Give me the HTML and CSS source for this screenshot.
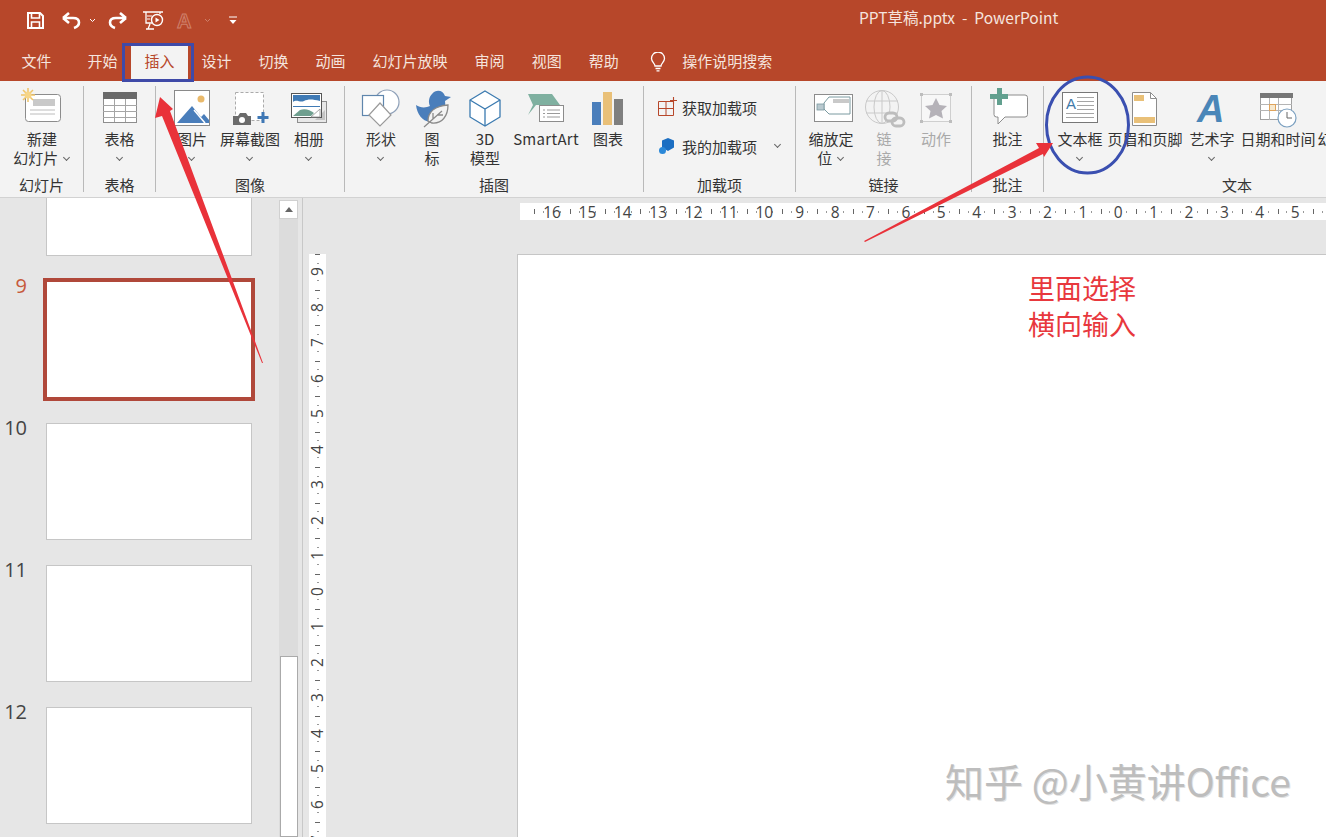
FILE: index.html
```html
<!DOCTYPE html>
<html lang="zh-CN">
<head>
<meta charset="utf-8">
<title>PPT草稿.pptx - PowerPoint</title>
<link rel="stylesheet" href="styles.css">
</head>
<body>
<div class="titlebar">
  <svg class="qat" width="260" height="40" viewBox="0 0 260 40" fill="none" stroke="#fff" stroke-width="2">
    <path d="M28 13h12l3 3v12H28z"/><path d="M31.500 13v5h8v-5M31.500 28v-6h8v6" stroke-width="1.600"/>
    <path d="M63 18l6-5M63 18l6 5M63 18h10c4 0 6 2 6 4.500 0 2.500-2 4.500-5 5.500" stroke-width="2.600"/>
    <path d="M90 19l2.500 2.500L95 19" stroke-width="1"/>
    <path d="M126 18l-6-5M126 18l-6 5M126 18h-10c-4 0-6 2-6 4.500 0 2.500 2 4.500 5 5.500" stroke-width="2.600"/>
    <path d="M143 12h20M146 12v11h6M160 12v2M150 24l-2 5M146 29h8" stroke-width="1.300"/>
    <path d="M147 16h5M147 19h3" stroke-width="1"/>
    <circle cx="157" cy="20" r="5.500" stroke-width="1.400"/><path d="M155.500 17.500l4 2.500-4 2.500z" fill="#fff" stroke="none"/>
    <text x="177" y="28" class="qat-a">A</text>
    <path d="M205 19l2.500 2.500 2.500-2.500" stroke="#cf806a" stroke-width="1"/>
    <path d="M229 17h8" stroke-width="1"/><path d="M229.500 20h7l-3.500 4z" fill="#fff" stroke="none"/>
  </svg>
  <div class="doc-title">PPT草稿.pptx&nbsp; - &nbsp;PowerPoint</div>
</div>

<nav class="tabs">
  <span class="tab tab-file">文件</span>
  <span class="tab">开始</span>
  <span class="tab tab-active">插入</span>
  <span class="tab">设计</span>
  <span class="tab">切换</span>
  <span class="tab">动画</span>
  <span class="tab">幻灯片放映</span>
  <span class="tab">审阅</span>
  <span class="tab">视图</span>
  <span class="tab">帮助</span>
  <svg class="bulb" width="16" height="20" viewBox="0 0 16 20" fill="none" stroke="#fff" stroke-width="1.300">
    <path d="M5 14c0-2.500-3.500-4-3.500-7.500a6.500 6.500 0 0 1 13 0C14.500 10 11 11.500 11 14z"/><path d="M5.500 16.500h5M6.500 18.800h3"/>
  </svg>
  <span class="tell">操作说明搜索</span>
</nav>

<section class="ribbon">
  <div class="group g-slides">
    <div class="buttons">
      <div class="btn b-new">
        <svg class="ico" width="48" height="40" viewBox="0 0 48 40">
          <rect x="7.500" y="6.500" width="35" height="27" rx="3" fill="#fff" stroke="#8c8c8c"/>
          <rect x="15" y="11" width="22" height="7" fill="#c9c9c9"/>
          <path d="M12 22h25M12 26h25" stroke="#bcbcbc"/>
          <path d="M10 0v14M3 7h14M5 2l10 10M15 2L5 12" stroke="#efc468" stroke-width="1.500"/>
          <circle cx="10" cy="7" r="3.500" fill="#f6d588"/>
        </svg>
        <div class="label">新建<br>幻灯片 <i class="chev"></i></div>
      </div>
    </div>
    <div class="group-name">幻灯片</div>
  </div>

  <div class="group g-tables">
    <div class="buttons">
      <div class="btn b-table">
        <svg class="ico" width="48" height="40" viewBox="0 0 48 40">
          <rect x="7.500" y="4.500" width="33" height="30" fill="#fff" stroke="#8e8e8e"/>
          <rect x="7" y="4" width="34" height="7" fill="#6a6a6a"/>
          <path d="M7 17.500h34M7 23.500h34M7 29.500h34M18.500 11v23M29.500 11v23" stroke="#a5a5a5"/>
        </svg>
        <div class="label">表格<br><i class="chev"></i></div>
      </div>
    </div>
    <div class="group-name">表格</div>
  </div>

  <div class="group g-images">
    <div class="buttons">
      <div class="btn b-pic">
        <svg class="ico" width="48" height="40" viewBox="0 0 48 40">
          <rect x="6.500" y="2.500" width="35" height="35" fill="#fff" stroke="#8a8a8a"/>
          <circle cx="33" cy="11" r="3.500" fill="#e9b96b"/>
          <path d="M9 35l15-17 9 11 3-3 5 6v3z" fill="#4a7ebb"/>
          <path d="M26 22l11 13" stroke="#fff" stroke-width="1.500"/>
        </svg>
        <div class="label">图片<br><i class="chev"></i></div>
      </div>
      <div class="btn b-shot">
        <svg class="ico" width="48" height="40" viewBox="0 0 48 40">
          <rect x="9.500" y="4.500" width="28" height="28" fill="#fff" stroke="#aaa" stroke-dasharray="3 2"/>
          <path d="M7 28h5l2-3h6l2 3h3v9H7z" fill="#6b6b6b"/>
          <circle cx="16" cy="32" r="3" fill="#fff"/>
          <path d="M37 24v11M31.500 29.500h11" stroke="#3f78b5" stroke-width="3"/>
        </svg>
        <div class="label">屏幕截图<br><i class="chev"></i></div>
      </div>
      <div class="btn b-album">
        <svg class="ico" width="48" height="40" viewBox="0 0 48 40">
          <rect x="12.500" y="13.500" width="29" height="21" fill="#e8e8e8" stroke="#8e8e8e"/>
          <path d="M30 32l10-10v10z" fill="#c4c4c4"/>
          <rect x="6.500" y="5.500" width="30" height="24" fill="#fff" stroke="#555"/>
          <rect x="8" y="7" width="27" height="12" fill="#3f7ab5"/>
          <path d="M8 14c4-3 7 1 11-1s8-2 16 0v5H8z" fill="#fff"/>
          <path d="M8 28l7-6c5-2 10 0 14 3l-3 3z" fill="#6f9f8f"/>
          <path d="M26 29l9-8v8z" fill="#fff" stroke="#8e8e8e" stroke-width=".8"/>
        </svg>
        <div class="label">相册<br><i class="chev"></i></div>
      </div>
    </div>
    <div class="group-name">图像</div>
  </div>

  <div class="group g-illus">
    <div class="buttons">
      <div class="btn b-shape">
        <svg class="ico" width="48" height="40" viewBox="0 0 48 40" fill="none">
          <circle cx="30" cy="14" r="12" fill="#fff" stroke="#8ea0b8" stroke-width="1.200"/>
          <rect x="5.500" y="7.500" width="21" height="20" fill="#fff" stroke="#5f86ad" stroke-width="1.200"/>
          <path d="M23 15l11 12-11 11-11-11z" fill="#fff" stroke="#9a9a9a" stroke-width="1.200"/>
        </svg>
        <div class="label">形状<br><i class="chev"></i></div>
      </div>
      <div class="btn b-icon">
        <svg class="ico" width="48" height="40" viewBox="0 0 48 40">
          <path d="M8 17C12 20 18 20 22 18 20 14 21 9 24 6 28 1 35 2 37 8L43 9 37 13C38 20 36 26 30 30L22 34C14 33 9 26 8 17z" fill="#4a7ebb"/>
          <path d="M20 33c0-9 7-15 20-16 0 11-6 19-16 18z" fill="#f3f3f3" stroke="#8a8a8a" stroke-width="1.300"/>
          <path d="M16 39l18-16M25 31v-6M29 27h6" fill="none" stroke="#8a8a8a" stroke-width="1.300"/>
        </svg>
        <div class="label">图<br>标</div>
      </div>
      <div class="btn b-3d">
        <svg class="ico" width="48" height="40" viewBox="0 0 48 40" fill="none" stroke="#3b7ab0" stroke-width="1.300">
          <path d="M24 3l15 9v17l-15 9-15-9V12z" fill="#fff"/><path d="M9 12l15 9 15-9M24 21v17"/>
        </svg>
        <div class="label">3D<br>模型</div>
      </div>
      <div class="btn b-smart">
        <svg class="ico" width="48" height="40" viewBox="0 0 48 40">
          <path d="M6 6h24l8 11H14l-8 10 5-10z" fill="#7fb0a0"/>
          <rect x="17.500" y="17.500" width="24" height="16" fill="#fff" stroke="#8c8c8c"/>
          <path d="M21 22h2M25 22h13M21 25.500h2M25 25.500h13M21 29h2M25 29h13" stroke="#9a9a9a"/>
        </svg>
        <div class="label">SmartArt</div>
      </div>
      <div class="btn b-chart">
        <svg class="ico" width="48" height="40" viewBox="0 0 48 40">
          <rect x="8" y="14" width="9" height="23" fill="#4a7ebb"/>
          <rect x="19" y="4" width="9" height="33" fill="#e9c078"/>
          <rect x="30" y="11" width="9" height="26" fill="#7f7f7f"/>
        </svg>
        <div class="label">图表</div>
      </div>
    </div>
    <div class="group-name">插图</div>
  </div>

  <div class="group g-addins">
    <div class="addin-list">
      <div class="addin">
        <svg width="20" height="20" viewBox="0 0 20 20" fill="none" stroke="#b7472a">
          <path d="M.5 4.500h15v14H.500zM8 4.500v14M.5 11.500h15"/><path d="M15.500 0v7M12 3.500h7" stroke-width="1.100"/>
        </svg>
        <span>获取加载项</span>
      </div>
      <div class="addin">
        <svg width="20" height="20" viewBox="0 0 20 20">
          <path d="M10 2l6 2.500v7L10 15l-6-3.500v-7z" fill="#1b6ec2"/><circle cx="4.500" cy="14.500" r="3.500" fill="#2b88d8"/>
        </svg>
        <span>我的加载项</span><i class="chev chev-addin"></i>
      </div>
    </div>
    <div class="group-name">加载项</div>
  </div>

  <div class="group g-links">
    <div class="buttons">
      <div class="btn b-zoom">
        <svg class="ico" width="48" height="40" viewBox="0 0 48 40">
          <rect x="7.500" y="6.500" width="38" height="27" fill="#fff" stroke="#8c8c8c"/>
          <path d="M17 15l5-6h21v17H22l-5-5z" fill="#fff" stroke="#7a9aa0"/>
          <rect x="10" y="16" width="7" height="6" fill="#b9c9cf" stroke="#7a9aa0" stroke-width=".8"/>
          <rect x="26" y="11" width="16" height="4" fill="#c9c9c9"/>
        </svg>
        <div class="label">缩放定<br>位 <i class="chev"></i></div>
      </div>
      <div class="btn b-link disabled">
        <svg class="ico" width="48" height="40" viewBox="0 0 48 40" fill="none" stroke="#c9c9c9">
          <circle cx="22" cy="19" r="16.500"/><ellipse cx="22" cy="19" rx="8" ry="16.500"/>
          <path d="M6 13h32M6 25h32M22 2v34"/>
          <rect x="25" y="25" width="12" height="8" rx="4" stroke="#bdbdbd" stroke-width="2.800" fill="#f3f3f3"/>
          <rect x="32" y="30" width="12" height="8" rx="4" stroke="#bdbdbd" stroke-width="2.800"/>
        </svg>
        <div class="label">链<br>接</div>
      </div>
      <div class="btn b-action disabled">
        <svg class="ico" width="48" height="40" viewBox="0 0 48 40">
          <rect x="9.500" y="6.500" width="29" height="27" fill="#f7f7f7" stroke="#cfcfcf"/>
          <path d="M24 10l3.500 7 7.500 1-5.500 5 1.500 7.500-7-3.500-7 3.500 1.500-7.500-5.500-5 7.500-1z" fill="#b5b2b8"/>
          <path d="M8 5h3v3H8zM37 5h3v3h-3zM8 32h3v3H8zM37 32h3v3h-3z" fill="#bdbdbd"/>
        </svg>
        <div class="label">动作</div>
      </div>
    </div>
    <div class="group-name">链接</div>
  </div>

  <div class="group g-comment">
    <div class="buttons">
      <div class="btn b-comment">
        <svg class="ico" width="48" height="40" viewBox="0 0 48 40">
          <path d="M10 7h31a2.500 2.500 0 0 1 2.500 2.500v17a2.500 2.500 0 0 1-2.500 2.500H21l-7 7v-7h-1.500A2.500 2.500 0 0 1 10 26.500z" fill="#fff" stroke="#8c8c8c"/>
          <path d="M13 0h5v6h6v5h-6v6h-5v-6H6V6h7z" fill="#62a08f"/>
        </svg>
        <div class="label">批注</div>
      </div>
    </div>
    <div class="group-name">批注</div>
  </div>

  <div class="group g-text">
    <div class="buttons">
      <div class="btn b-textbox">
        <svg class="ico" width="48" height="40" viewBox="0 0 48 40">
          <rect x="6.500" y="4.500" width="35" height="30" fill="#fff" stroke="#777"/>
          <text x="10" y="21" class="ico-a">A</text>
          <path d="M21 9.500h17M21 13.500h17M21 17.500h17M21 21.500h17M10 25.500h28M10 29.500h28" stroke="#a5a5a5"/>
        </svg>
        <div class="label">文本框<br><i class="chev"></i></div>
      </div>
      <div class="btn b-header">
        <svg class="ico" width="48" height="40" viewBox="0 0 48 40">
          <path d="M11.500 4.500h18l6 6v27h-24z" fill="#fff" stroke="#8c8c8c"/>
          <path d="M29.500 4.500v6h6" fill="none" stroke="#8c8c8c"/>
          <rect x="13" y="7" width="10" height="6" fill="#e9c078"/>
          <rect x="13" y="29" width="21" height="6" fill="#e9c078"/>
        </svg>
        <div class="label">页眉和页脚</div>
      </div>
      <div class="btn b-wordart">
        <svg class="ico" width="48" height="40" viewBox="0 0 48 40">
          <text x="9" y="34" class="ico-wa">A</text>
        </svg>
        <div class="label">艺术字<br><i class="chev"></i></div>
      </div>
      <div class="btn b-date">
        <svg class="ico" width="48" height="40" viewBox="0 0 48 40">
          <rect x="6.500" y="5.500" width="31" height="26" fill="#fff" stroke="#a0a0a0"/>
          <rect x="6" y="5" width="33" height="5" fill="#777"/>
          <path d="M6 16.500h32M6 22.500h32M15.500 10v22M24.500 10v22" stroke="#b5b5b5"/>
          <rect x="15.500" y="16.500" width="6" height="6" fill="#f7e9cf" stroke="#e0a45c"/>
          <circle cx="33" cy="30" r="9" fill="#fff" stroke="#7ba0c0" stroke-width="1.200"/>
          <path d="M33 24v6h5" fill="none" stroke="#666"/>
        </svg>
        <div class="label">日期和时间</div>
      </div>
      <div class="btn b-number">
        <div class="ico-gap"></div>
        <div class="label">幻灯片编号</div>
      </div>
    </div>
    <div class="group-name">文本</div>
  </div>
</section>

<main class="main">
  <aside class="thumbs">
    <div class="row row-first"><span class="num"></span><div class="thumb thumb-first"></div></div>
    <div class="row"><span class="num num-active">9</span><div class="thumb thumb-active"></div></div>
    <div class="row"><span class="num">10</span><div class="thumb"></div></div>
    <div class="row"><span class="num">11</span><div class="thumb"></div></div>
    <div class="row"><span class="num">12</span><div class="thumb"></div></div>
  </aside>
  <div class="scrollbar">
    <div class="sb-up"><i class="sb-tri"></i></div>
    <div class="sb-thumb"></div>
  </div>
  <div class="editor">
    <div class="hruler">
      <span>16</span><span>15</span><span>14</span><span>13</span><span>12</span><span>11</span><span>10</span><span>9</span><span>8</span><span>7</span><span>6</span><span>5</span><span>4</span><span>3</span><span>2</span><span>1</span><span>0</span><span>1</span><span>2</span><span>3</span><span>4</span><span>5</span><span>6</span>
    </div>
    <div class="stage">
      <div class="vruler">
        <span><b>9</b></span><span><b>8</b></span><span><b>7</b></span><span><b>6</b></span><span><b>5</b></span><span><b>4</b></span><span><b>3</b></span><span><b>2</b></span><span><b>1</b></span><span><b>0</b></span><span><b>1</b></span><span><b>2</b></span><span><b>3</b></span><span><b>4</b></span><span><b>5</b></span><span><b>6</b></span><span><b>7</b></span>
      </div>
      <div class="slide"></div>
    </div>
  </div>
</main>

<svg class="annot" width="1326" height="837" viewBox="0 0 1326 837">
  <rect x="123.500" y="44.500" width="69" height="36" fill="none" stroke="#3f4aa8" stroke-width="3"/>
  <ellipse cx="1087.500" cy="125" rx="41" ry="48" fill="none" stroke="#3a4fb0" stroke-width="3"/>
  <path d="M160 97l13 12-3 2 93 252-1 0-100-247-7 2z" fill="#e9323a"/>
  <path d="M1053 143l-17 0 3 5-175 93 1 1 178-88 1 3z" fill="#e9323a"/>
</svg>
<div class="note">里面选择<br>横向输入</div>
<div class="watermark">知乎 @小黄讲Office</div>
</body>
</html>
```
FILE: styles.css
```css
* { box-sizing: border-box; }
html, body { margin: 0; height: 837px; overflow: hidden; }
body {
  position: relative;
  width: 1326px;
  font-family: "Noto Sans CJK SC", "Noto Sans", sans-serif;
  font-size: 15px;
  color: #333;
  background: #e6e6e6;
}

.titlebar { height: 40px; background: #b7472a; display: flex; align-items: center; color: #f5e4de; }
.qat { flex: none; }
.qat-a { font: bold 20px "Liberation Sans", sans-serif; fill: none; stroke: #cf806a; stroke-width: 1; }
.doc-title { margin-left: 599px; font-size: 15.500px; white-space: nowrap; margin-top: -6px; }

.tabs { height: 41px; background: #b7472a; display: flex; align-items: flex-end; padding-left: 8px; color: #f5e4de; }
.tab { height: 37px; line-height: 34px; padding: 0 13.500px; white-space: nowrap; }
.tab-file { margin-right: 9px; }
.tab-active { background: #f3f3f3; color: #b7472a; }
.bulb { margin: 0 16px 9px 18px; flex: none; }
.tell { height: 37px; line-height: 34px; }

.ribbon { height: 117px; padding-top: 5px; background: #f3f3f3; border-bottom: 1px solid #d2d2d2; display: flex; overflow: hidden; }
.group { height: 106px; flex: none; display: flex; flex-direction: column; border-right: 1px solid #b9b9b9; }
.group-name { height: 14px; line-height: 14px; text-align: center; white-space: nowrap; }
.buttons { flex: 1; display: flex; }
.g-slides { width: 84px; }
.g-tables { width: 72px; }
.g-images { width: 189px; padding-left: 11px; }
.g-illus { width: 299px; padding-left: 11px; }
.g-addins { width: 152px; }
.g-links { width: 176px; padding-left: 5px; }
.g-comment { width: 72px; }
.g-text { width: 386px; padding-left: 9px; border-right: 0; }
.g-images .group-name { margin-left: -11px; }
.g-illus .group-name { margin-left: -11px; }
.g-links .group-name { margin-left: -5px; }
.g-text .group-name { margin-left: -9px; }

.btn { flex: none; padding-top: 2px; display: flex; flex-direction: column; align-items: center; }
.ico { flex: none; display: block; }
.ico-gap { height: 40px; flex: none; }
.ico-a { font: 15px "Liberation Sans", sans-serif; fill: #3f7aa8; }
.ico-wa { font: italic bold 38px "Liberation Sans", sans-serif; fill: #4a86b8; }
.label { margin-top: 2px; line-height: 18.500px; text-align: center; white-space: nowrap; }
.disabled .label { color: #a9a9a9; }
.chev { display: inline-block; width: 5px; height: 5px; border-right: 1px solid #666; border-bottom: 1px solid #666; transform: rotate(45deg); margin: 0 2px 4px; }

.b-new { width: 84px; }
.b-table { width: 71px; }
.b-pic { width: 50px; }
.b-shot { width: 66px; }
.b-album { width: 52px; }
.b-shape { width: 50px; }
.b-icon { width: 52px; }
.b-3d { width: 54px; }
.b-smart { width: 68px; }
.b-smart .label { letter-spacing: .3px; }
.b-chart { width: 56px; }
.b-zoom { width: 60px; }
.b-link { width: 46px; }
.b-action { width: 58px; }
.b-comment { width: 71px; }
.b-textbox { width: 54px; }
.b-header { width: 76px; }
.b-wordart { width: 58px; }
.b-date { width: 74px; }
.b-number { width: 80px; }

.addin-list { flex: 1; padding: 11px 0 0 14px; display: flex; flex-direction: column; gap: 19px; }
.addin { height: 20px; display: flex; align-items: center; gap: 4px; white-space: nowrap; }
.chev-addin { margin: 0 0 4px 14px; }

.main { height: 639px; display: flex; overflow: hidden; }
.thumbs { width: 279px; flex: none; display: flex; flex-direction: column; gap: 25px; }
.row { display: flex; flex: none; align-items: flex-start; }
.num { width: 27px; margin-right: 19px; margin-top: -6px; text-align: right; font: 20px/18px "Open Sans", sans-serif; padding-top: 2px; color: #444; flex: none; }
.num-active { color: #c65a3c; }
.thumb { width: 206px; height: 117px; background: #fff; border: 1px solid #c6c6c6; }
.thumb-first { height: 58px; border-top: 0; }
.thumb-active { border-color: #b0483a; outline: 3px solid #b0483a; }

.scrollbar { width: 19px; flex: none; margin-top: 2px; background: #dcdcdc; display: flex; flex-direction: column; justify-content: space-between; }
.sb-up { height: 19px; background: #fff; border: 1px solid #d0d0d0; display: flex; align-items: center; justify-content: center; }
.sb-tri { width: 0; height: 0; border-left: 4px solid transparent; border-right: 4px solid transparent; border-bottom: 5px solid #666; }
.sb-thumb { height: 181px; margin-left: 1px; background: #fff; border: 1px solid #aaa; }

.editor { flex: 1; min-width: 0; margin-left: 4px; border-left: 1px solid #c8c8c8; overflow: hidden; }
.hruler {
  height: 17px; margin: 5px 0 34px 217px; padding-left: 14.300px;
  background: #fff; display: flex; font: 15.500px/18px "Open Sans", sans-serif; color: #444;
}
.hruler span {
  flex: none; width: 35.400px; text-align: center;
  background:
    linear-gradient(#666, #666) 0 50% / 1px 5px no-repeat,
    linear-gradient(#999, #999) 26% 50% / 1px 2px no-repeat,
    linear-gradient(#999, #999) 74% 50% / 1px 2px no-repeat;
}
.stage { display: flex; align-items: flex-start; padding-left: 6px; }
.vruler {
  width: 17px; flex: none; background: #fff; display: flex; flex-direction: column;
  font: 15.500px/17px "Open Sans", sans-serif; color: #444;
}
.vruler span {
  height: 35.500px; flex: none; display: flex; align-items: center; justify-content: center;
  background:
    linear-gradient(#666, #666) 50% 0 / 5px 1px no-repeat,
    linear-gradient(#999, #999) 50% 26% / 2px 1px no-repeat,
    linear-gradient(#999, #999) 50% 74% / 2px 1px no-repeat;
}
.vruler b { font-weight: 400; writing-mode: vertical-rl; transform: rotate(180deg); }
.slide { width: 900px; height: 640px; margin-left: 191px; background: #fff; border: 1px solid #c6c6c6; flex: none; }

.annot { position: absolute; left: 0; top: 0; pointer-events: none; }
.note { position: absolute; left: 1028px; top: 270px; font-size: 27px; line-height: 36px; color: #e8383d; }
.watermark {
  position: absolute; left: 945px; top: 755px; font-size: 39px; line-height: 50px; white-space: nowrap;
  color: #bdbdbd; text-shadow: 1px 1px 0 #e2e2e2;
}
```
